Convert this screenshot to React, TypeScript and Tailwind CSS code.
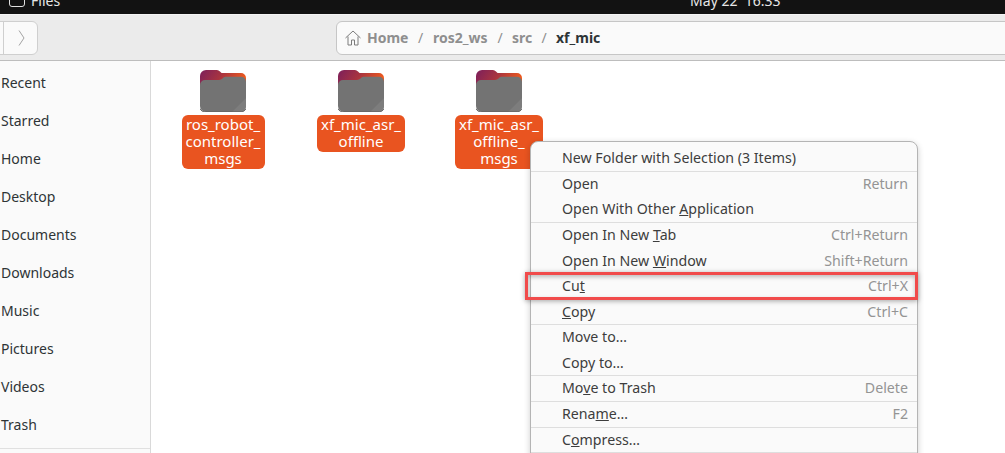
import type { ReactNode } from "react";

const places = ["Recent", "Starred", "Home", "Desktop", "Documents", "Downloads", "Music", "Pictures", "Videos", "Trash"];

const folders = [
	{ id: "a", lines: ["ros_robot_", "controller_", "msgs"] },
	{ id: "b", lines: ["xf_mic_asr_", "offline"] },
	{ id: "c", lines: ["xf_mic_asr_", "offline_", "msgs"] },
];

const FolderIcon = ({ id }: { id: string }) => (
	<svg width="46" height="42" viewBox="0 0 46 42">
		<defs>
			<linearGradient id={`back-${id}`} x1="0" y1="0" x2="1" y2="0.3">
				<stop offset="0" stopColor="#7c1f5c" />
				<stop offset="0.5" stopColor="#a8343f" />
				<stop offset="1" stopColor="#ee5a1e" />
			</linearGradient>
		</defs>
		<path
			d="M0 6a6 6 0 0 1 6-6h10a5 5 0 0 1 4 1.500l1 1a2 2 0 0 0 1.500 0.500H41a5 5 0 0 1 5 5v12H0z"
			fill={`url(#back-${id})`}
		/>
		<path
			d="M0 15a5 5 0 0 1 5-5h14a5 5 0 0 0 3.500-1.500l1-1a3 3 0 0 1 2-0.800H41a5 5 0 0 1 5 5V36a6 6 0 0 1-6 6H6a6 6 0 0 1-6-6z"
			fill="#737373"
		/>
		<path d="M46 28V36a6 6 0 0 1-6 6H32z" fill="#7d7d7d" />
		<path d="M0 38.500a6 6 0 0 0 6 3.500H40a6 6 0 0 0 6-3.500" fill="none" stroke="#5e5e5e" strokeWidth="1" />
	</svg>
);

const Row = ({ children, accel }: { children: ReactNode; accel?: string }) => (
	<div className="flex h-[25.6px] items-center justify-between pl-[31px] pr-[9px]">
		<span className="text-[#3d3d3d]">{children}</span>
		{accel && <span className="text-[#949494]">{accel}</span>}
	</div>
);

const Section = ({ children }: { children: ReactNode }) => (
	<div className="-mb-px border-b border-[#dedede]">{children}</div>
);

export default function App() {
	return (
		<div className="relative flex h-[453px] w-[1005px] flex-col overflow-hidden bg-white font-['Noto_Sans',sans-serif] text-[14px]">
			{/* top bar, cut off by the crop */}
			<div className="h-[14px] shrink-0 overflow-hidden bg-[#121212] text-[#e6e6e6]">
				<div className="relative -mt-[10px] flex h-[20px] items-center pl-[9px]">
					<span className="h-[14px] w-[16px] rounded-[3px] border border-[#e0e0e0]" />
					<span className="ml-[6px]">Files</span>
					<span className="ml-[630px] whitespace-pre">May 22  16:33</span>
				</div>
			</div>

			{/* header */}
			<div className="flex h-[47px] shrink-0 items-center overflow-hidden border-y border-t-[#f4f4f4] border-b-[#bdbdbd] bg-[#ebebeb]">
				<div className="-ml-[10px] flex h-[34px] w-[48px] shrink-0 items-center rounded-[6px] border border-[#cfcfcf] bg-[#fafafa]">
					<div className="h-full w-[13px] border-r border-[#cfcfcf]" />
					<svg width="7" height="16" viewBox="0 0 7 16" fill="none" stroke="#a3a3a3" strokeWidth="1" className="ml-[14px]">
						<path d="M1 0.500 6 8l-5 7.500" />
					</svg>
				</div>
				<div className="-mr-[20px] ml-[298px] flex h-[34px] flex-1 items-center rounded-[6px] border border-[#c6c6c6] bg-[#fafafa] pl-[8px] font-bold text-[#8f8f8f]">
					<svg width="16" height="16" viewBox="0 0 16 16" fill="none" stroke="#7c7c7c" strokeWidth="1">
						<path d="M0.500 8 8 1l7.500 7M3 6.500V15h3.500v-5h3v5H13V6.500" />
					</svg>
					<span className="ml-[6px] w-[41px]">Home</span>
					<span className="w-[25px] text-center font-normal">/</span>
					<span className="w-[55px]">ros2_ws</span>
					<span className="w-[24px] text-center font-normal">/</span>
					<span className="w-[20px]">src</span>
					<span className="w-[24px] text-center font-normal">/</span>
					<span className="text-[#2e3436]">xf_mic</span>
				</div>
			</div>

			<div className="flex min-h-0 flex-1">
				{/* sidebar */}
				<div className="w-[151px] shrink-0 border-r border-[#d9d9d9] bg-[#fafafa] pt-[2px] text-[#2e3436]">
					{places.map((place) => (
						<div key={place} className="flex h-[38px] items-center pl-[1px]">
							{place}
						</div>
					))}
					<div className="mt-[5px] border-t border-[#e0e0e0]" />
				</div>

				{/* files */}
				<div className="flex flex-1 items-start pl-[3px] pt-[9px]">
					{folders.map((folder) => (
						<div key={folder.id} className="flex w-[138px] flex-col items-center">
							<FolderIcon id={folder.id} />
							<div className="mt-[3px] flex flex-col items-center rounded-[6px] bg-[#e95420] px-[4px] pb-[2.500px] pt-[0.500px] text-[15px] text-white">
								{folder.lines.map((line) => (
									<span key={line} className="h-[17px] leading-[17px]">
										{line}
									</span>
								))}
							</div>
						</div>
					))}
				</div>
			</div>

			{/* context menu */}
			<div className="absolute left-[530px] top-[141px] h-[330px] w-[388px] rounded-[8px] border border-[#b4b4b4] bg-[#fafafa] pt-[3px] text-[14.2px] shadow-[0_2px_6px_rgba(0,0,0,0.2)]">
				<Section>
					<Row>New Folder with Selection (3 Items)</Row>
				</Section>
				<Section>
					<Row accel="Return">Open</Row>
					<Row>
						Open With Other <u>A</u>pplication
					</Row>
				</Section>
				<Section>
					<Row accel="Ctrl+Return">
						Open In New <u>T</u>ab
					</Row>
					<Row accel="Shift+Return">
						Open In New <u>W</u>indow
					</Row>
					<Row accel="Ctrl+X">
						Cu<u>t</u>
					</Row>
					<Row accel="Ctrl+C">
						<u>C</u>opy
					</Row>
				</Section>
				<Section>
					<Row>Move to…</Row>
					<Row>Copy to…</Row>
				</Section>
				<Section>
					<Row accel="Delete">
						Mo<u>v</u>e to Trash
					</Row>
				</Section>
				<Section>
					<Row accel="F2">
						Rena<u>m</u>e…
					</Row>
				</Section>
				<Section>
					<Row>
						C<u>o</u>mpress…
					</Row>
				</Section>
			</div>

			{/* red highlight around Cut */}
			<div className="absolute left-[525px] top-[272px] h-[28px] w-[393px] border-[3px] border-[#f14b4b] shadow-[0_1px_5px_rgba(0,0,0,0.35),inset_0_2px_4px_rgba(0,0,0,0.25)]" />
		</div>
	);
}
